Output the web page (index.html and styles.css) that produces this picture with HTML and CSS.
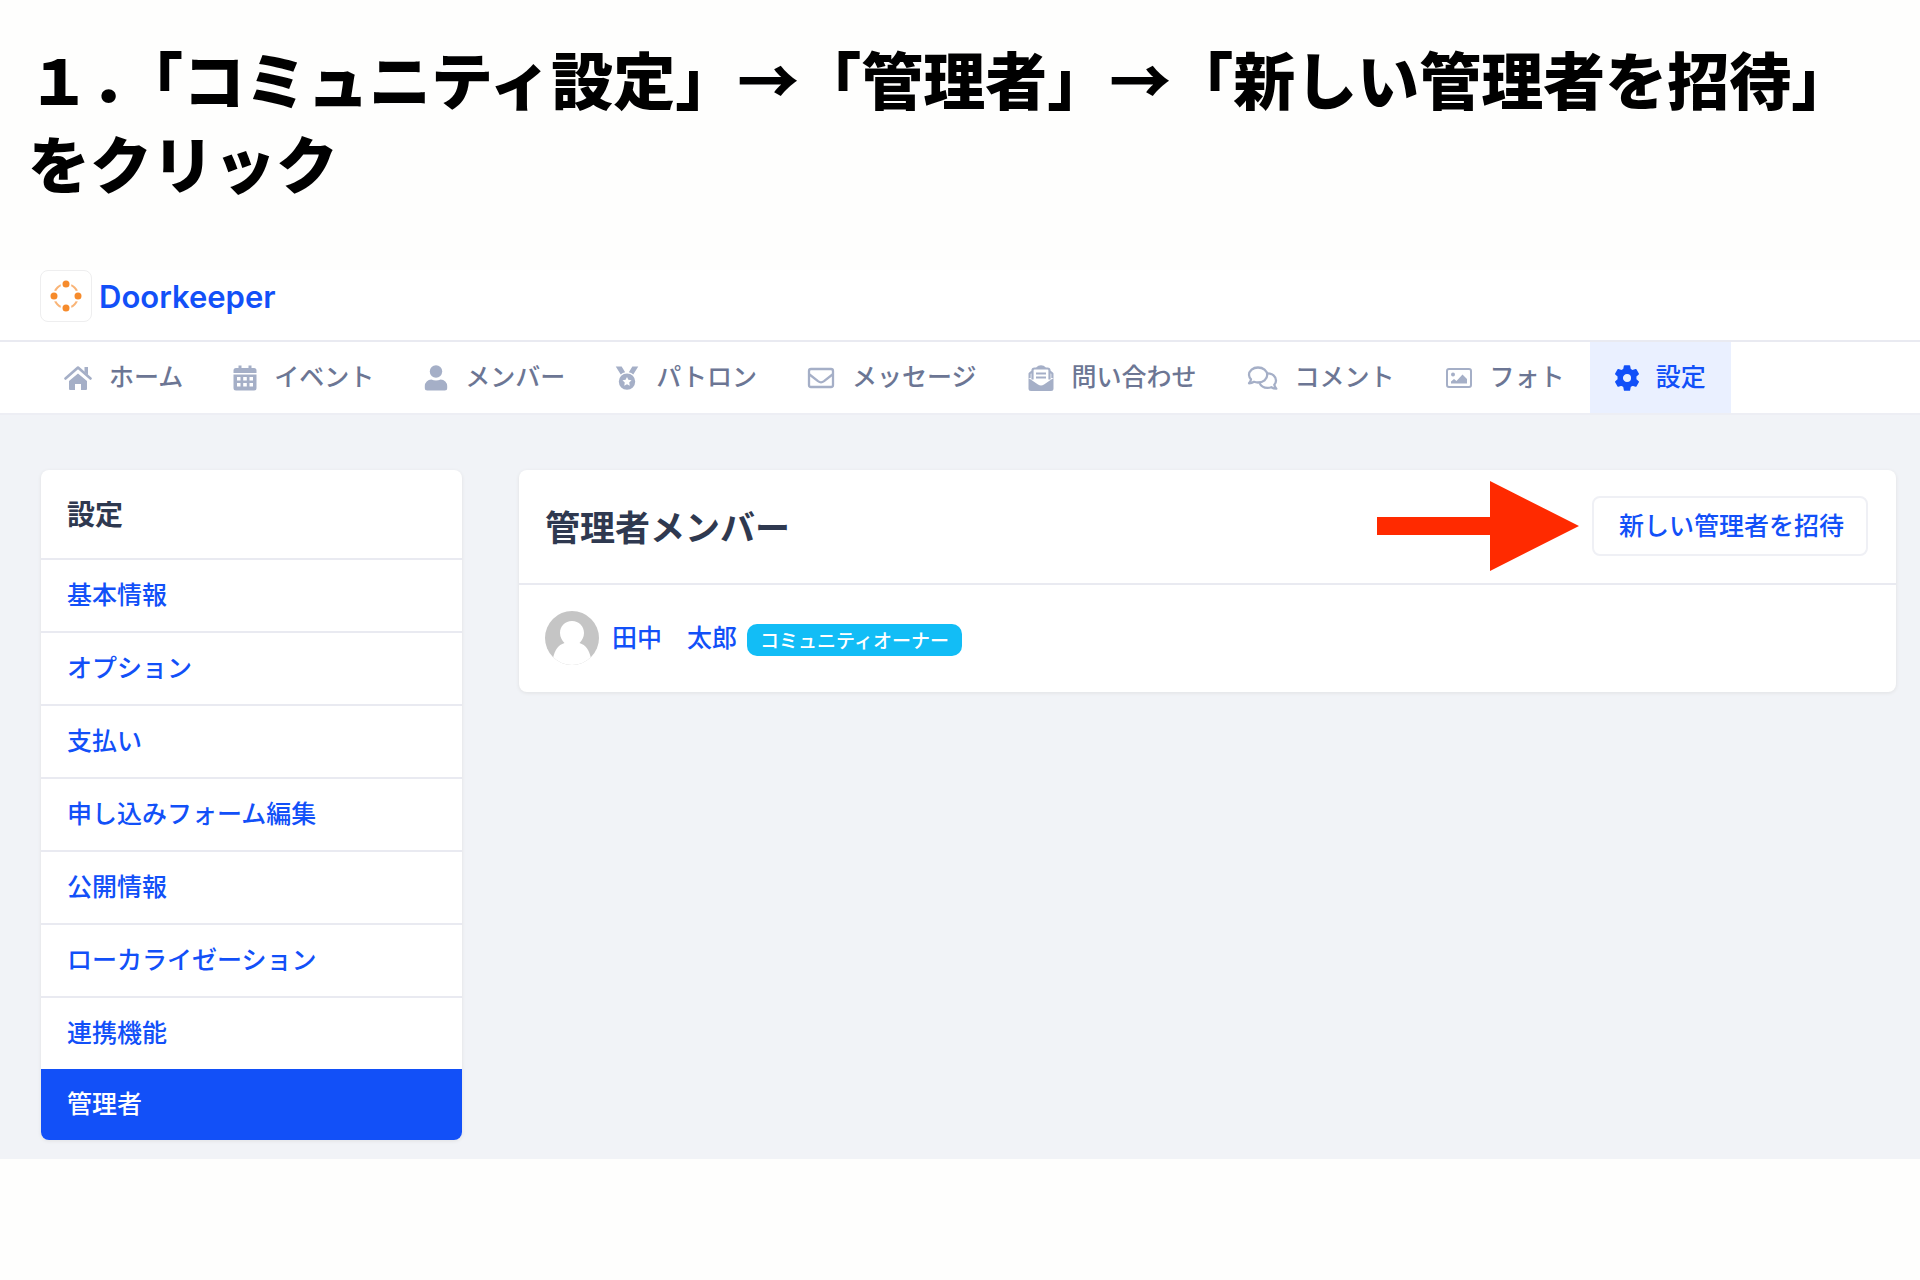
FILE: index.html
```html
<!DOCTYPE html>
<html lang="ja">
<head>
<meta charset="utf-8">
<meta name="viewport" content="width=device-width, initial-scale=1">
<title>Doorkeeper - 管理者</title>
<link rel="stylesheet" href="styles.css">
</head>
<body>
<h1 class="step-title">１．「コミュニティ設定」→「管理者」→「新しい管理者を招待」をクリック</h1>

<div class="app">
  <header class="brand-bar">
    <a class="brand" href="#">
      <span class="brand-logo">
        <svg width="32" height="32" viewBox="0 0 32 32" aria-hidden="true">
          <circle cx="16" cy="16" r="12" fill="none" stroke="#f9b477" stroke-width="2"/>
          <g stroke="#fff" stroke-width="2" fill="#f68b2c">
            <circle cx="16" cy="4" r="4.500"/><circle cx="28" cy="16" r="4.500"/>
            <circle cx="16" cy="28" r="4.500"/><circle cx="4" cy="16" r="4.500"/>
          </g>
        </svg>
      </span>
      <span class="brand-name">Doorkeeper</span>
    </a>
  </header>

  <nav class="main-nav" aria-label="メイン">
    <a class="nav-item" href="#">
      <svg class="icon" viewBox="0 0 28 28" aria-hidden="true"><path d="M1.500 14.500 14 3.500l12.500 11" fill="none" stroke="currentColor" stroke-width="2.600" stroke-linecap="round" stroke-linejoin="round"/><path d="M20.500 3h3.500v8l-3.500-3zM5 17l9-7.600 9 7.600V25a1 1 0 0 1-1 1h-5v-6h-6v6H6a1 1 0 0 1-1-1z" fill="currentColor"/></svg>
      <span>ホーム</span></a>
    <a class="nav-item" href="#">
      <svg class="icon icon-narrow" viewBox="2 0 24 28" aria-hidden="true"><path fill="currentColor" fill-rule="evenodd" d="M7.500 1.500h3V4h7V1.500h3V4H23a2.500 2.500 0 0 1 2.500 2.500V9h-23V6.500A2.500 2.500 0 0 1 5 4h2.500zM2.500 10.500h23v13.500a2.500 2.500 0 0 1-2.500 2.500H5A2.500 2.500 0 0 1 2.500 24zM6 13v3.500h3.500V13zm6.200 0v3.500h3.600V13zm6.300 0v3.500H22V13zM6 19v3.500h3.500V19zm6.200 0v3.500h3.600V19zm6.300 0v3.500H22V19z"/></svg>
      <span>イベント</span></a>
    <a class="nav-item" href="#">
      <svg class="icon icon-narrow" viewBox="2 0 24 28" aria-hidden="true"><circle cx="14" cy="7.500" r="6.200" fill="currentColor"/><path fill="currentColor" d="M2.800 22a6.500 6.500 0 0 1 6.500-6.500c1.700.6 3 .9 4.700.9s3-.3 4.700-.9a6.500 6.500 0 0 1 6.500 6.500v2a2.500 2.500 0 0 1-2.500 2.500H5.300A2.500 2.500 0 0 1 2.800 24z"/></svg>
      <span>メンバー</span></a>
    <a class="nav-item" href="#">
      <svg class="icon icon-narrow" viewBox="1 0 26 28" aria-hidden="true"><path fill="currentColor" d="M1.800 1.500h6.400L12 7.800a10 10 0 0 0-4.800 2.300zM26.200 1.500h-6.400L16 7.800a10 10 0 0 1 4.800 2.300z"/><path fill="currentColor" fill-rule="evenodd" d="M14 9a8.900 8.900 0 1 0 0 17.800A8.900 8.900 0 0 0 14 9zm0 4 1.500 3 3.400.5-2.500 2.400.6 3.400-3-1.600-3 1.600.6-3.400-2.500-2.400 3.400-.5z"/></svg>
      <span>パトロン</span></a>
    <a class="nav-item" href="#">
      <svg class="icon" viewBox="0 0 28 28" aria-hidden="true"><g fill="none" stroke="currentColor" stroke-width="2.300"><rect x="2" y="5" width="24" height="18" rx="2"/><path d="M2.500 10.500 11 17.200c2 1.500 4 1.500 6 0l8.500-6.700"/></g></svg>
      <span>メッセージ</span></a>
    <a class="nav-item" href="#">
      <svg class="icon" viewBox="0 0 28 28" aria-hidden="true"><path fill="currentColor" d="M1.500 14 11 20.500c2 1.400 4 1.400 6 0l9.500-6.500V24.500a2.500 2.500 0 0 1-2.500 2.500H4a2.500 2.500 0 0 1-2.500-2.500z"/><path fill="none" stroke="currentColor" stroke-width="2.200" stroke-linejoin="round" d="M5.500 15.500V6.500a2 2 0 0 1 2-2h13a2 2 0 0 1 2 2v9M9.500 4.500c3-2.800 6-2.800 9 0M2.600 14V9.500l3-2.500M25.400 14V9.500l-3-2.500"/><path fill="currentColor" d="M9 8.500h10v2H9zM9 12.500h10v2H9z"/></svg>
      <span>問い合わせ</span></a>
    <a class="nav-item" href="#">
      <svg class="icon icon-wide" viewBox="0 0 30 28" aria-hidden="true"><g fill="none" stroke="currentColor" stroke-width="2.300" stroke-linejoin="round"><path d="M10.500 3.500c5.200 0 9.200 3.300 9.200 7.500s-4 7.500-9.200 7.500c-1.400 0-2.800-.2-4-.7-1.300.9-3 1.500-5 1.500 1-1.200 1.800-2.500 2-4A7 7 0 0 1 1.500 11c0-4.200 4-7.500 9-7.500z"/><path d="M20 9.300c4.800 0 8.500 3.200 8.500 7.200 0 1.600-.6 3.100-1.700 4.300.3 1.500 1 2.700 2 3.900-2 0-3.700-.6-5-1.500-1.200.5-2.500.7-3.800.7-3.500 0-6.600-1.900-7.900-4.800"/></g></svg>
      <span>コメント</span></a>
    <a class="nav-item" href="#">
      <svg class="icon" viewBox="0 0 28 28" aria-hidden="true"><rect x="2" y="5" width="24" height="18" rx="2" fill="none" stroke="currentColor" stroke-width="2"/><circle cx="8" cy="10.500" r="2" fill="currentColor"/><path fill="currentColor" d="M6 19.500v-2l3-2.500 2.500 2 6-6.500 4.500 4.500v4.500z"/></svg>
      <span>フォト</span></a>
    <a class="nav-item is-active" href="#" aria-current="page">
      <svg class="icon icon-narrow" viewBox="2 0 24 28" aria-hidden="true"><path fill="currentColor" fill-rule="evenodd" stroke="currentColor" stroke-width="1.500" stroke-linejoin="round" d="M11.600 2h4.800l.7 3.400 2.500 1.400 3.200-1.100 2.400 4.200-2.500 2.300v3.400l2.500 2.300-2.400 4.200-3.200-1.100-2.500 1.400-.7 3.600h-4.800l-.7-3.600-2.500-1.400-3.200 1.100-2.400-4.200 2.500-2.300v-3.400L2.800 9.900l2.400-4.200 3.200 1.100 2.500-1.400zM14 9.200a4.800 4.800 0 1 0 0 9.600 4.800 4.800 0 0 0 0-9.600z"/></svg>
      <span>設定</span></a>
  </nav>

  <div class="workspace">
    <aside class="card settings">
      <h2 class="settings-title">設定</h2>
      <nav class="settings-list" aria-label="設定">
        <a href="#">基本情報</a>
        <a href="#">オプション</a>
        <a href="#">支払い</a>
        <a href="#">申し込みフォーム編集</a>
        <a href="#">公開情報</a>
        <a href="#">ローカライゼーション</a>
        <a href="#">連携機能</a>
        <a class="is-current" href="#" aria-current="page">管理者</a>
      </nav>
    </aside>

    <main class="card members">
      <div class="members-head">
        <h2 class="members-title">管理者メンバー</h2>
        <svg class="pointer" viewBox="0 0 202 90" aria-hidden="true"><path fill="#ff2a00" d="M0 36h113V0l89 45-89 45V54H0z"/></svg>
        <button class="invite" type="button">新しい管理者を招待</button>
      </div>
      <div class="member">
        <svg class="avatar" viewBox="0 0 54 54" aria-hidden="true"><defs><clipPath id="face"><circle cx="27" cy="27" r="27"/></clipPath></defs><g clip-path="url(#face)"><path fill="#c5c5c5" d="M0 0h54v54H0z"/><path fill="#fff" d="M27 10c7 0 12 5 12 12 0 4-2 7.500-4.500 10C41 34 44 39 46 47v7H8v-7c2-8 5-13 11.500-15C17 29.500 15 26 15 22c0-7 5-12 12-12z"/></g></svg>
        <a class="member-name" href="#">田中　太郎</a>
        <span class="badge">コミュニティオーナー</span>
      </div>
    </main>
  </div>
</div>
</body>
</html>
```
FILE: styles.css
```css
* {
  box-sizing: border-box;
}

body {
  margin: 0;
  background: #fefefd;
  color: #2f3950;
  font-family: "Noto Sans CJK JP", sans-serif;
  font-size: 25px;
  font-weight: 500;
  line-height: 36px;
}

a {
  color: #1250f8;
  text-decoration: none;
}

.step-title {
  margin: 0;
  padding: 36px 28px 66px;
  color: #000;
  font-size: 62px;
  font-weight: 900;
  line-height: 84px;
}

.app {
  background: #fff;
}

/* Brand bar */
.brand-bar {
  display: flex;
  padding: 0 40px 18px;
  border-bottom: 2px solid #e9eaf1;
}

.brand {
  display: flex;
  align-items: center;
  gap: 7px;
}

.brand-logo {
  display: flex;
  align-items: center;
  justify-content: center;
  width: 52px;
  height: 52px;
  border: 1px solid #eeeeef;
  border-radius: 8px;
}

.brand-name {
  padding-top: 2px;
  font-family: Inter, sans-serif;
  font-size: 31px;
  font-weight: 600;
}

/* Main navigation */
.main-nav {
  display: flex;
  padding-left: 39px;
  border-bottom: 2px solid #edeef4;
}

.nav-item {
  display: flex;
  align-items: center;
  gap: 17px;
  height: 71px;
  padding: 0 25px;
  color: #6c7694;
  white-space: nowrap;
}

.nav-item span {
  padding-bottom: 5px;
}

.icon {
  flex: none;
  width: 28px;
  height: 28px;
  color: #a5afc7;
}

.icon-narrow {
  width: 24px;
}

.icon-wide {
  width: 31px;
}

.nav-item.is-active {
  background: #eaf0ff;
  color: #1250f8;
}

.nav-item.is-active .icon {
  color: #1250f8;
}

/* Workspace */
.workspace {
  display: grid;
  grid-template-columns: 421px 1fr;
  align-items: start;
  gap: 57px;
  padding: 55px 24px 19px 41px;
  background: #f1f3f7;
}

.card {
  overflow: hidden;
  border-radius: 8px;
  background: #fff;
  box-shadow: 0 1px 3px 1px #e6e7ea;
}

.settings-title {
  margin: 0;
  padding: 25px 26px 27px;
  font-size: 28px;
  font-weight: 700;
  line-height: 36px;
}

.settings-list a {
  display: flex;
  align-items: center;
  height: 73px;
  padding: 0 26px 5px;
  border-top: 2px solid #e9eaf1;
}

.settings-list .is-current {
  height: 71px;
  border-top: 0;
  background: #1250f8;
  color: #fff;
}

.members-head {
  display: flex;
  align-items: center;
  gap: 13px;
  padding: 11px 28px 12px 26px;
  border-bottom: 2px solid #e9eaf1;
}

.members-title {
  flex: 1;
  margin: 0;
  font-size: 35px;
  font-weight: 700;
  line-height: 48px;
}

.pointer {
  width: 202px;
  height: 90px;
}

.invite {
  height: 60px;
  padding: 0 22px 4px 25px;
  border: 2px solid #eff0f5;
  border-radius: 8px;
  background: #fff;
  color: #1250f8;
  font: inherit;
}

.member {
  display: flex;
  align-items: center;
  padding: 26px 26px 27px;
}

.avatar {
  width: 54px;
  height: 54px;
  margin-right: 13px;
}

.member-name {
  padding-bottom: 4px;
}

.badge {
  margin: 4px 0 0 10px;
  padding: 0 13px;
  border-radius: 10px;
  background: #12bdf6;
  color: #fff;
  font-size: 19px;
  line-height: 32px;
}
```
